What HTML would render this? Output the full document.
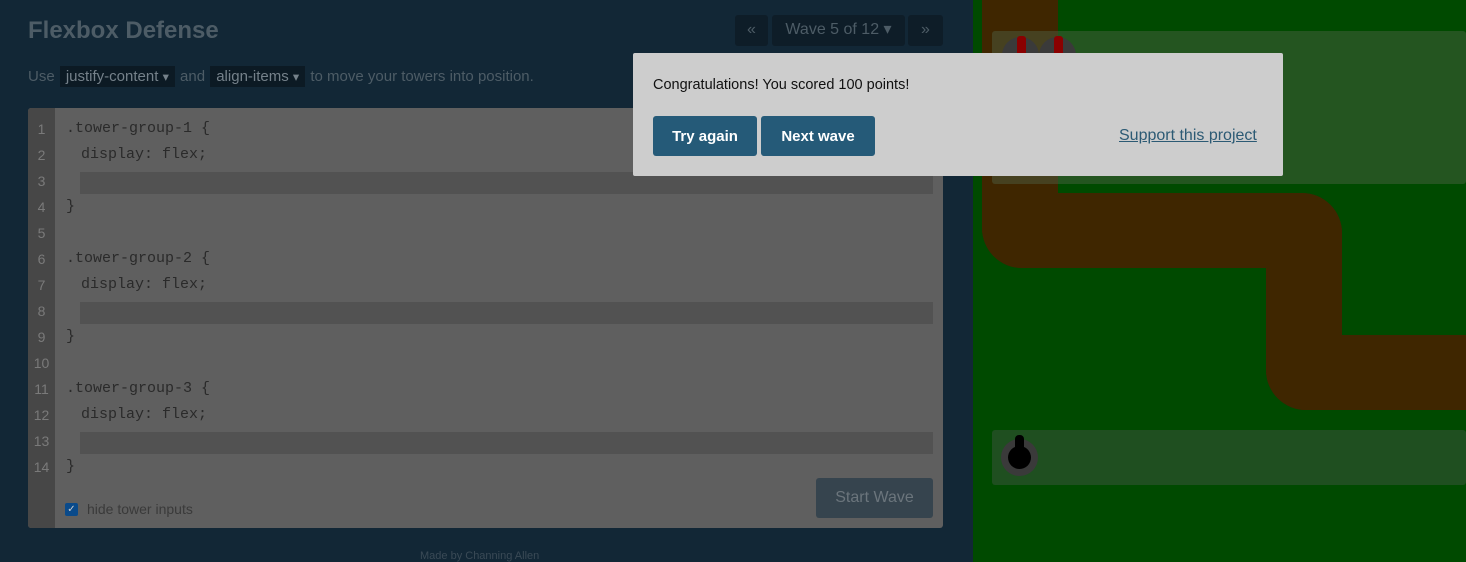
<!DOCTYPE html><html><head><style>
body{margin:0;width:1466px;height:562px;overflow:hidden;background:#122736;font-family:"Liberation Sans",sans-serif;position:relative}
.a{position:absolute}
.code{font-family:"Liberation Mono",monospace;font-size:15px;color:#2a2a2a}
.ln{position:absolute;left:28px;width:27px;text-align:center;color:#7a7a7a;font-size:14px;font-family:"Liberation Sans",sans-serif}
.tx{position:absolute;left:66px;white-space:pre}
.in{left:81px}
.hl{position:absolute;left:80px;width:853px;height:22px;background:#525252}
.btn{position:absolute;background:#255a78;color:#fff;font-weight:bold;font-size:15px;border-radius:3px;text-align:center;line-height:41px;height:40px;top:116px}
</style></head><body>
<div class="a" style="left:28px;top:17px;font-size:24px;font-weight:bold;color:#4d5c66">Flexbox Defense</div>
<div class="a" style="left:28px;top:68px;font-size:15px;color:#4d5c66;white-space:nowrap">Use <span style="background:#0c1a24;color:#75818a;padding:2px 6px;margin:0 1px">justify-content <small>▾</small></span> and <span style="background:#0c1a24;color:#75818a;padding:2px 6px;margin:0 1px">align-items <small>▾</small></span> to move your towers into position.</div>
<div class="a" style="left:735px;top:15px;width:33px;height:31px;background:#0e1d28;border-radius:3px;color:#4d5c66;text-align:center;line-height:30px">«</div>
<div class="a" style="left:772px;top:15px;width:133px;height:31px;background:#0e1d28;border-radius:3px;color:#4d5c66;text-align:center;line-height:30px;font-size:16px">Wave 5 of 12 ▾</div>
<div class="a" style="left:908px;top:15px;width:35px;height:31px;background:#0e1d28;border-radius:3px;color:#4d5c66;text-align:center;line-height:30px">»</div>
<div class="a" style="left:28px;top:108px;width:915px;height:420px;background:#5f5f5f;border-radius:3px;overflow:hidden">
<div class="a" style="left:0;top:0;width:27px;height:420px;background:#474747"></div></div>
<div class="code">
<div class="hl" style="top:172px"></div><div class="hl" style="top:302px"></div><div class="hl" style="top:432px"></div>
<div class="ln" style="top:121px">1</div><div class="tx" style="top:120px">.tower-group-1 {</div>
<div class="ln" style="top:147px">2</div><div class="tx in" style="top:146px">display: flex;</div>
<div class="ln" style="top:173px">3</div>
<div class="ln" style="top:199px">4</div><div class="tx" style="top:198px">}</div>
<div class="ln" style="top:225px">5</div>
<div class="ln" style="top:251px">6</div><div class="tx" style="top:250px">.tower-group-2 {</div>
<div class="ln" style="top:277px">7</div><div class="tx in" style="top:276px">display: flex;</div>
<div class="ln" style="top:303px">8</div>
<div class="ln" style="top:329px">9</div><div class="tx" style="top:328px">}</div>
<div class="ln" style="top:355px">10</div>
<div class="ln" style="top:381px">11</div><div class="tx" style="top:380px">.tower-group-3 {</div>
<div class="ln" style="top:407px">12</div><div class="tx in" style="top:406px">display: flex;</div>
<div class="ln" style="top:433px">13</div>
<div class="ln" style="top:459px">14</div><div class="tx" style="top:458px">}</div>
</div>
<div class="a" style="left:65px;top:503px;width:13px;height:13px;background:#0a4a8a;border-radius:2px;color:#ccc;font-size:10px;text-align:center;line-height:13px">✓</div>
<div class="a" style="left:87px;top:501px;font-size:14px;color:#3a3a3a">hide tower inputs</div>
<div class="a" style="left:816px;top:478px;width:117px;height:40px;background:#36444e;border-radius:3px;color:#6b757c;font-size:16px;text-align:center;line-height:40px">Start Wave</div>
<div class="a" style="left:420px;top:550px;font-size:11px;color:#3a4a56">Made by Channing Allen</div>
<div class="a" style="left:973px;top:0;width:493px;height:562px;background:#004a00;overflow:hidden">
<div class="a" style="left:9px;top:0;width:76px;height:268px;background:#3f2600;border-radius:0 0 0 40px"></div>
<div class="a" style="left:9px;top:193px;width:360px;height:75px;background:#3f2600;border-radius:0 40px 0 40px"></div>
<div class="a" style="left:293px;top:193px;width:76px;height:217px;background:#3f2600;border-radius:0 40px 0 40px"></div>
<div class="a" style="left:293px;top:335px;width:200px;height:75px;background:#3f2600;border-radius:0 0 0 40px"></div>
<div class="a" style="left:19px;top:31px;width:474px;height:153px;background:rgba(80,100,70,.45);border-radius:3px"></div>
<div class="a" style="left:19px;top:430px;width:474px;height:55px;background:#1f4f20;border-radius:3px"></div>
<div class="a" style="left:28px;top:439px;width:37px;height:37px;border-radius:50%;background:#3a3a3a"></div>
<div class="a" style="left:35px;top:446px;width:23px;height:23px;border-radius:50%;background:#000"></div>
<div class="a" style="left:42px;top:435px;width:9px;height:18px;border-radius:4px;background:#000"></div>
<div class="a" style="left:29px;top:37px;width:37px;height:37px;border-radius:50%;background:#3a3a3a"></div>
<div class="a" style="left:66px;top:37px;width:37px;height:37px;border-radius:50%;background:#3a3a3a"></div>
<div class="a" style="left:44px;top:36px;width:9px;height:20px;background:#8a0000;border-radius:3px"></div>
<div class="a" style="left:81px;top:36px;width:9px;height:20px;background:#8a0000;border-radius:3px"></div>
</div>
<div class="a" style="left:633px;top:53px;width:650px;height:123px;background:#cdcdcd;border-radius:2px">
<div class="a" style="left:20px;top:24px;font-size:14.5px;color:#111">Congratulations! You scored 100 points!</div>
<a class="a" style="left:486px;top:74px;font-size:16px;color:#2c5a74;text-decoration:underline">Support this project</a>
</div>
<div class="btn" style="left:653px;width:104px">Try again</div>
<div class="btn" style="left:761px;width:114px">Next wave</div>
</body></html>
